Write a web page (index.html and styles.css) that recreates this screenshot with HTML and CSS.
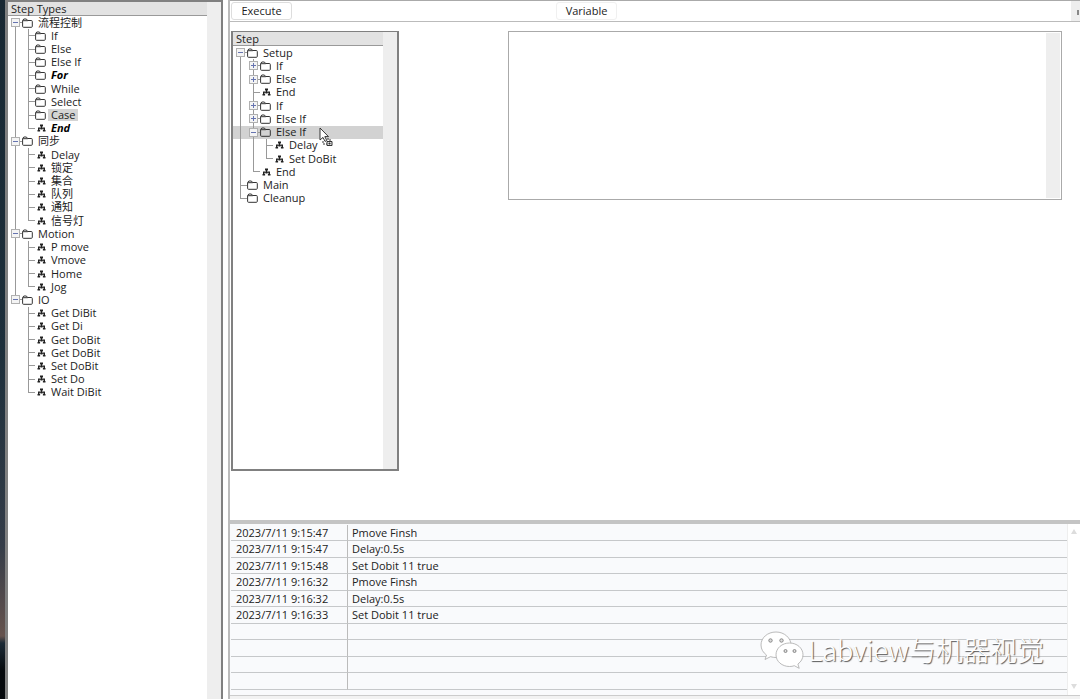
FILE: index.html
```html
<!DOCTYPE html>
<html lang="zh-CN">
<head>
<meta charset="utf-8">
<title>Step Editor</title>
<link rel="stylesheet" href="styles.css">
</head>
<body>
<svg class="defs" aria-hidden="true">
  <symbol id="folder" viewBox="0 0 11 10">
    <path d="M.6 8.400V2.600L1.800 1h2.600l1.200 1.500h3.700q1 0 1 1v4.900q0 .9-1 .9H1.500q-.9 0-.9-.9zM.8 2.700h5" fill="none" stroke="#333" stroke-width="1"/>
  </symbol>
  <symbol id="step" viewBox="0 0 11 10">
    <path d="M5 1.500h3v2H5zM6 3h1v2H6zM3 4.500h7v1.200H3zM3 5.500h1.500v1.500H3zM8.500 5.500H10v1.500H8.500zM2.500 7h2.600v1.500H2.500zM7.900 7h2.600v1.500H7.900zM5.500 5.500h2v1h-2z" fill="#222"/>
  </symbol>
</svg>
<div class="app">
  <div class="desktop"></div>
  <aside class="palette">
    <div class="pane">
      <h2 class="title">Step Types</h2>
      <ul class="tree tree-types">
        <li><i class="box first"></i><svg><use href="#folder"/></svg><span>流程控制</span></li>
        <li><i class="v"></i><i class="t"></i><svg><use href="#folder"/></svg><span>If</span></li>
        <li><i class="v"></i><i class="t"></i><svg><use href="#folder"/></svg><span>Else</span></li>
        <li><i class="v"></i><i class="t"></i><svg><use href="#folder"/></svg><span>Else If</span></li>
        <li><i class="v"></i><i class="t"></i><svg><use href="#folder"/></svg><span class="key">For</span></li>
        <li><i class="v"></i><i class="t"></i><svg><use href="#folder"/></svg><span>While</span></li>
        <li><i class="v"></i><i class="t"></i><svg><use href="#folder"/></svg><span>Select</span></li>
        <li><i class="v"></i><i class="t"></i><svg><use href="#folder"/></svg><span class="picked">Case</span></li>
        <li><i class="v"></i><i class="l"></i><svg><use href="#step"/></svg><span class="key">End</span></li>
        <li><i class="box"></i><svg><use href="#folder"/></svg><span>同步</span></li>
        <li><i class="v"></i><i class="t"></i><svg><use href="#step"/></svg><span>Delay</span></li>
        <li><i class="v"></i><i class="t"></i><svg><use href="#step"/></svg><span>锁定</span></li>
        <li><i class="v"></i><i class="t"></i><svg><use href="#step"/></svg><span>集合</span></li>
        <li><i class="v"></i><i class="t"></i><svg><use href="#step"/></svg><span>队列</span></li>
        <li><i class="v"></i><i class="t"></i><svg><use href="#step"/></svg><span>通知</span></li>
        <li><i class="v"></i><i class="l"></i><svg><use href="#step"/></svg><span>信号灯</span></li>
        <li><i class="box"></i><svg><use href="#folder"/></svg><span>Motion</span></li>
        <li><i class="v"></i><i class="t"></i><svg><use href="#step"/></svg><span>P move</span></li>
        <li><i class="v"></i><i class="t"></i><svg><use href="#step"/></svg><span>Vmove</span></li>
        <li><i class="v"></i><i class="t"></i><svg><use href="#step"/></svg><span>Home</span></li>
        <li><i class="v"></i><i class="l"></i><svg><use href="#step"/></svg><span>Jog</span></li>
        <li><i class="box last"></i><svg><use href="#folder"/></svg><span>IO</span></li>
        <li><i></i><i class="t"></i><svg><use href="#step"/></svg><span>Get DiBit</span></li>
        <li><i></i><i class="t"></i><svg><use href="#step"/></svg><span>Get Di</span></li>
        <li><i></i><i class="t"></i><svg><use href="#step"/></svg><span>Get DoBit</span></li>
        <li><i></i><i class="t"></i><svg><use href="#step"/></svg><span>Get DoBit</span></li>
        <li><i></i><i class="t"></i><svg><use href="#step"/></svg><span>Set DoBit</span></li>
        <li><i></i><i class="t"></i><svg><use href="#step"/></svg><span>Set Do</span></li>
        <li><i></i><i class="l"></i><svg><use href="#step"/></svg><span>Wait DiBit</span></li>
      </ul>
    </div>
    <div class="gutter"></div>
  </aside>
  <main class="main">
    <div class="toolbar">
      <button class="btn" type="button">Execute</button>
      <button class="btn btn-soft" type="button">Variable</button>
      <div class="toolbar-end"></div>
    </div>
    <div class="work">
      <section class="steps">
        <div class="pane">
          <h2 class="title">Step</h2>
          <ul class="tree tree-steps">
            <li><i class="box first"></i><svg><use href="#folder"/></svg><span>Setup</span></li>
            <li><i class="v"></i><i class="box plus"></i><svg><use href="#folder"/></svg><span>If</span></li>
            <li><i class="v"></i><i class="box plus"></i><svg><use href="#folder"/></svg><span>Else</span></li>
            <li><i class="v"></i><i class="t"></i><svg><use href="#step"/></svg><span>End</span></li>
            <li><i class="v"></i><i class="box plus"></i><svg><use href="#folder"/></svg><span>If</span></li>
            <li><i class="v"></i><i class="box plus"></i><svg><use href="#folder"/></svg><span>Else If</span></li>
            <li class="active"><i class="v"></i><i class="box"></i><svg><use href="#folder"/></svg><span>Else If</span>
              <svg class="cursor" viewBox="0 0 15 21" aria-hidden="true">
                <path d="M1 1v12l3-2.600 2 4 1.800-.9-2-3.900h3.700z" fill="#fff" stroke="#222" stroke-width=".9"/>
                <path d="M4 14v3h4M8 12h3v3" fill="none" stroke="#333" stroke-width="1" stroke-dasharray="2 1"/>
                <path d="M8 14.500h5v4H8zM9.500 16.500h2M10.500 15.500v2" fill="#ddd" stroke="#333" stroke-width="1"/>
              </svg>
            </li>
            <li><i class="v"></i><i class="v"></i><i class="t"></i><svg><use href="#step"/></svg><span>Delay</span></li>
            <li><i class="v"></i><i class="v"></i><i class="l"></i><svg><use href="#step"/></svg><span>Set DoBit</span></li>
            <li><i class="v"></i><i class="l"></i><svg><use href="#step"/></svg><span>End</span></li>
            <li><i class="t"></i><svg><use href="#folder"/></svg><span>Main</span></li>
            <li><i class="l"></i><svg><use href="#folder"/></svg><span>Cleanup</span></li>
          </ul>
        </div>
        <div class="gutter"></div>
      </section>
      <div class="editor">
        <textarea aria-label="Step details"></textarea>
        <div class="gutter"></div>
      </div>
    </div>
    <section class="log">
      <div class="log-view">
        <table>
          <tbody>
            <tr><td>2023/7/11 9:15:47</td><td>Pmove Finsh</td></tr>
            <tr><td>2023/7/11 9:15:47</td><td>Delay:0.5s</td></tr>
            <tr><td>2023/7/11 9:15:48</td><td>Set Dobit 11 true</td></tr>
            <tr><td>2023/7/11 9:16:32</td><td>Pmove Finsh</td></tr>
            <tr><td>2023/7/11 9:16:32</td><td>Delay:0.5s</td></tr>
            <tr><td>2023/7/11 9:16:33</td><td>Set Dobit 11 true</td></tr>
            <tr><td></td><td></td></tr>
            <tr><td></td><td></td></tr>
            <tr><td></td><td></td></tr>
            <tr><td></td><td></td></tr>
          </tbody>
        </table>
      </div>
      <div class="log-scroll">
        <svg viewBox="0 0 8 6"><path d="M4 0l3 5H1z" fill="#ddd"/></svg>
        <svg viewBox="0 0 8 6"><path d="M4 5l3-5H1z" fill="#ddd"/></svg>
      </div>
    </section>
    <div class="status"></div>
  </main>
  <div class="watermark">
    <svg viewBox="0 0 44 38" aria-hidden="true">
      <g fill="#fff" stroke="#aaa" stroke-width=".8">
        <path d="M16 1C7.500 1 1 6.800 1 14c0 4.200 2.200 7.600 5.500 10L5 28.500l5.500-2.800c1.800.5 3.600.8 5.500.8 8.500 0 15-5.700 15-12.500S24.500 1 16 1z"/>
        <path d="M29.500 12C22 12 16 17.200 16 23.800S22 35.500 29.500 35.500c1.700 0 3.300-.2 4.800-.8l4.900 2.600-1.300-4.300c3.200-2.200 5.100-5.400 5.100-9.200C43 17.200 37 12 29.500 12z"/>
      </g>
      <g fill="#ddd" stroke="#888">
        <circle cx="10.500" cy="9.500" r="1.700"/><circle cx="21.500" cy="9.500" r="1.700"/>
        <circle cx="25.500" cy="20" r="1.500"/><circle cx="34.500" cy="20" r="1.500"/>
      </g>
    </svg>
    <span>Labview与机器视觉</span>
  </div>
</div>
</body>
</html>
```
FILE: styles.css
```css
* { box-sizing: border-box; }

body {
  margin: 0;
  background: #fff;
  color: #222;
  font: 11px/13px "Open Sans", "Noto Sans CJK SC", sans-serif;
}

.defs { position: absolute; width: 0; height: 0; }

.app {
  position: relative;
  display: flex;
  height: 100vh;
  overflow: hidden;
}

.desktop {
  flex: 0 0 5px;
  background: linear-gradient(#182833 0%, #1d2f3b 50%, #343c48 78%, #66534e 91%, #1b2a36 92%, #05080c 96%);
}

.gutter { flex: 0 0 14px; background: #eee; }
.pane { flex: 1; min-width: 0; }

.palette {
  display: flex;
  flex: 0 0 218px;
  border: solid #808080;
  border-width: 2px 2px 0 3px;
}

.title {
  margin: 0;
  height: 14px;
  padding-left: 3px;
  border-bottom: 1px solid #999;
  background: #e2e2e2;
  font: inherit;
  line-height: 14px;
}

/* trees: rows share the list's height evenly */
.tree {
  display: grid;
  grid-auto-rows: 1fr;
  margin: 0;
  padding: 0;
  list-style: none;
}
.tree-types { height: 383px; }
.tree-steps { height: 159px; }
.tree li {
  position: relative;
  display: flex;
  align-items: center;
  min-height: 0;
  padding-left: 1px;
  white-space: nowrap;
}
.tree li > svg { flex: none; width: 11px; height: 10px; margin-right: 2px; }
.tree span { padding: 0 3px; line-height: 12px; }
.tree .key { color: #000; font-weight: 700; font-style: italic; }
.tree .picked { background: #d4d4d4; }
.tree .active { background: #d2d2d2; }

.tree i {
  --line: linear-gradient(#999, #999);
  display: flex;
  flex: 0 0 13px;
  align-self: stretch;
  align-items: center;
  justify-content: center;
  background-repeat: no-repeat;
}
.tree .v { background-image: var(--line); background-position: 6px 0; background-size: 1px 100%; }
.tree .t, .tree .l, .tree .box { background-image: var(--line), var(--line); background-position: 6px 0, 6px 50%; }
.tree .t, .tree .box { background-size: 1px 100%, 7px 1px; }
.tree .l { background-size: 1px 50%, 7px 1px; }
.tree .first { background-position: 6px 100%, 6px 50%; background-size: 1px 50%, 7px 1px; }
.tree .last { background-size: 1px 50%, 7px 1px; }
.tree .box::before {
  content: "";
  width: 7px;
  height: 7px;
  border: 1px solid #b0b0b0;
  background: linear-gradient(#6674b0, #6674b0) center / 5px 1px no-repeat, #f4f4f4;
}
.tree .plus::before {
  background:
    linear-gradient(#6674b0, #6674b0) center / 5px 1px no-repeat,
    linear-gradient(#6674b0, #6674b0) center / 1px 5px no-repeat,
    #f4f4f4;
}

.tree li > .cursor {
  position: absolute;
  left: 86px;
  top: 1px;
  z-index: 1;
  width: 15px;
  height: 21px;
  margin: 0;
}

.main {
  display: flex;
  flex: 1;
  flex-direction: column;
  min-width: 0;
  margin-left: 5px;
  border-left: 2px solid #bbb;
}

.toolbar {
  display: flex;
  height: 22px;
  border-top: 1px solid #aaa;
  border-bottom: 1px solid #bbb;
}
.btn {
  width: 61px;
  height: 18px;
  margin: 1px 0 0 1px;
  padding: 0 0 2px;
  border: 1px solid #ddd;
  border-radius: 3px;
  background: #fff;
  color: inherit;
  font: inherit;
}
.btn-soft { margin-left: 264px; border-color: #f0f0f0; }
.toolbar-end { width: 9px; margin-left: auto; background: linear-gradient(#888, #888) 6px 9px / 2px 5px no-repeat #eee; }

.work { display: flex; flex: 1; min-height: 0; padding: 9px 18px 49px 1px; }

.steps {
  display: flex;
  flex: 0 0 168px;
  border: solid #808080;
  border-width: 1px 2px 2px;
}
.editor {
  display: flex;
  flex: 1;
  height: 169px;
  margin-left: 109px;
  padding: 1px;
  border: 1px solid #aaa;
}
.editor textarea {
  flex: 1;
  min-width: 0;
  padding: 4px;
  border: 0;
  outline: 0;
  background: #fff;
  font: inherit;
  resize: none;
}

.log {
  display: flex;
  border-top: 4px solid #c4c4c4;
  border-bottom: 1px solid #ccc;
}
.log-view { flex: 1; padding: 1px 0 5px 1px; background: #f9fafc; }
.log table {
  width: 100%;
  border-collapse: separate;
  border-spacing: 0;
  table-layout: fixed;
}
.log tr { height: 16px; }
.log tr:nth-child(even) { height: 17px; }
.log td {
  padding: 0 4px 1px;
  border-bottom: 1px solid #c6c8ca;
}
.log td:first-child { width: 117px; padding-left: 5px; border-right: 1px solid #bbb; }
.log-scroll {
  display: flex;
  flex: 0 0 13px;
  flex-direction: column;
  justify-content: space-between;
  align-items: center;
  padding: 5px 0;
  border-left: 1px solid #eee;
}
.log-scroll svg { width: 8px; height: 6px; }
.status { height: 3px; background: #f2f2f2; }

.watermark {
  position: absolute;
  right: 36px;
  bottom: 30px;
  display: flex;
  align-items: center;
  gap: 4px;
  color: #fff;
  font: 300 27px/38px "Noto Sans CJK SC", sans-serif;
  text-shadow: 1px 1px 1px #555;
}
.watermark svg { width: 44px; height: 38px; }
```
